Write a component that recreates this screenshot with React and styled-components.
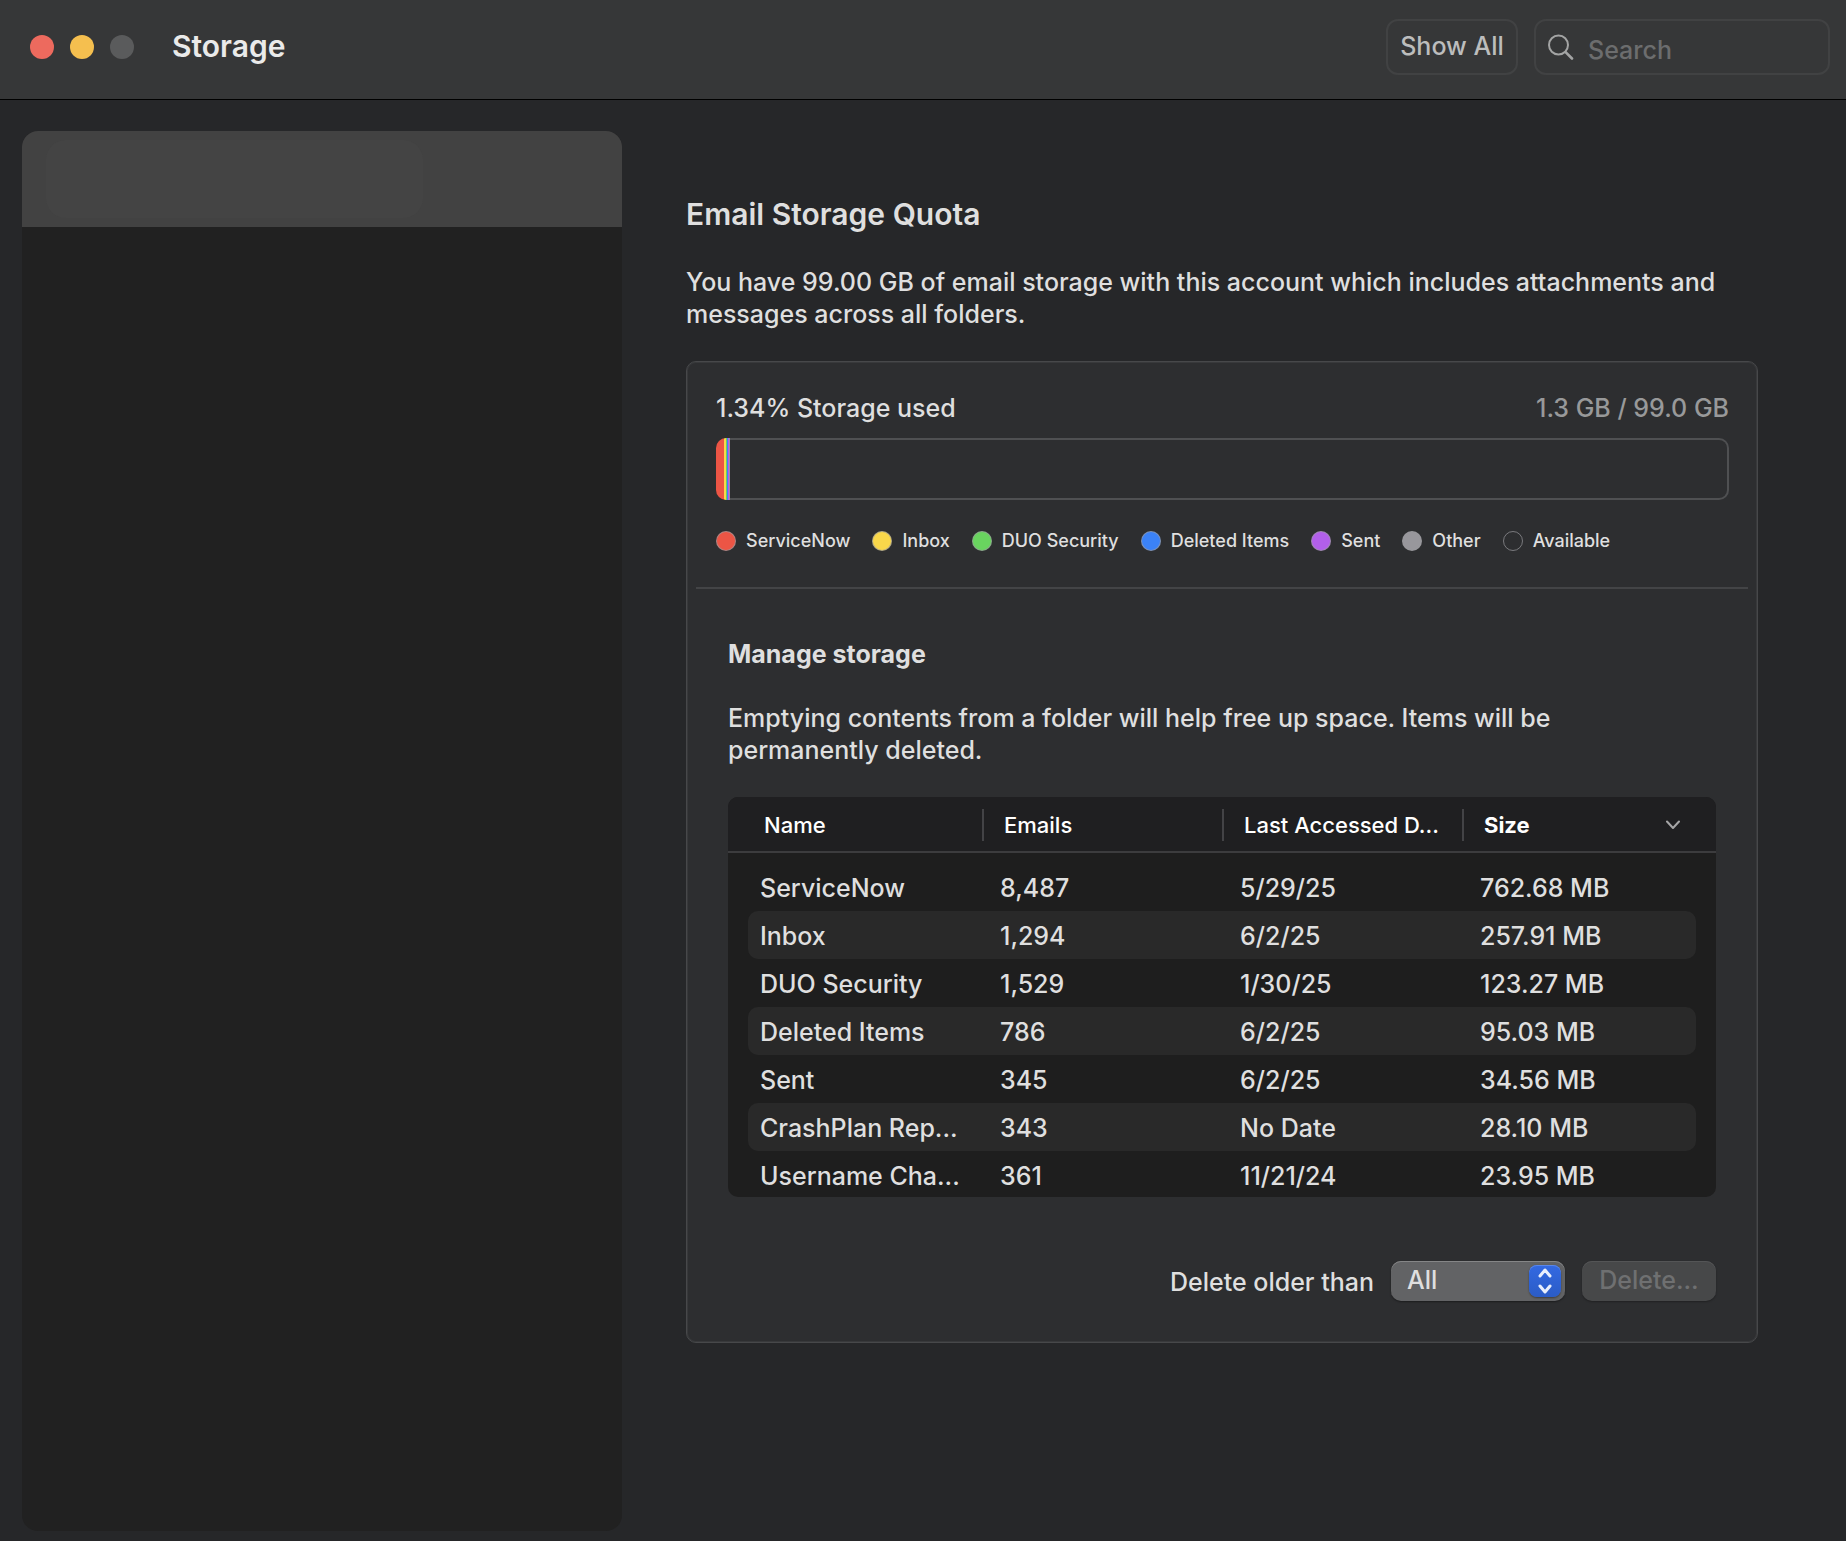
import React, { useState } from 'react';
import styled, { createGlobalStyle } from 'styled-components';

const segments = [
	{ name: 'ServiceNow', color: '#ec5545', width: 8 },
	{ name: 'Inbox', color: '#f9d74a', width: 2 },
	{ name: 'DUO Security', color: '#69d45f', width: 1 },
	{ name: 'Deleted Items', color: '#3b82f7', width: 1 },
	{ name: 'Sent', color: '#b25fea', width: 1 },
	{ name: 'Other', color: '#98979c', width: 1 },
];

const folders = [
	{ name: 'ServiceNow', emails: '8,487', date: '5/29/25', size: '762.68 MB' },
	{ name: 'Inbox', emails: '1,294', date: '6/2/25', size: '257.91 MB' },
	{ name: 'DUO Security', emails: '1,529', date: '1/30/25', size: '123.27 MB' },
	{ name: 'Deleted Items', emails: '786', date: '6/2/25', size: '95.03 MB' },
	{ name: 'Sent', emails: '345', date: '6/2/25', size: '34.56 MB' },
	{ name: 'CrashPlan Rep...', emails: '343', date: 'No Date', size: '28.10 MB' },
	{ name: 'Username Cha...', emails: '361', date: '11/21/24', size: '23.95 MB' },
];

const App = () => {
	const [keyword, setKeyword] = useState('');
	const [olderThan, setOlderThan] = useState('all');

	return (
		<>
			<GlobalStyle />
			<Window>
				<TitleBar>
					<Lights>
						<Light $color="#ed6a5e" aria-label="Close" />
						<Light $color="#f5bf4f" aria-label="Minimize" />
						<Light $color="#5a5b5c" aria-label="Zoom" disabled />
					</Lights>
					<WindowTitle>Storage</WindowTitle>
					<ShowAllBtn type="button">Show All</ShowAllBtn>
					<SearchBox>
						<svg width="26" height="26" viewBox="0 0 26 26" fill="none" stroke="#a3a4a4" strokeLinecap="round">
							<circle cx="10.5" cy="11" r="9.5" strokeWidth="2" />
							<path d="M17.6 18.1L24 24.5" strokeWidth="2.6" />
						</svg>
						<SearchInput type="text" aria-label="Search" placeholder="Search" value={keyword} onChange={(e) => setKeyword(e.target.value)} />
					</SearchBox>
				</TitleBar>

				<Body>
					<Sidebar>
						<AccountRow type="button" aria-label="Account">
							<AccountName />
						</AccountRow>
					</Sidebar>

					<Content>
						<Title>Email Storage Quota</Title>
						<Desc>You have 99.00 GB of email storage with this account which includes attachments and messages across all folders.</Desc>

						<Card>
							<Usage>
								<UsageHead>
									<span>1.34% Storage used</span>
									<Quota>1.3 GB / 99.0 GB</Quota>
								</UsageHead>
								<UsageBar>
									<Used>
										{segments.map((s) => (
											<div key={s.name} style={{ width: s.width, background: s.color }} />
										))}
									</Used>
									<Free />
								</UsageBar>
								<Legend>
									{segments.map((s) => (
										<LegendItem key={s.name}>
											<Dot $color={s.color} />
											{s.name}
										</LegendItem>
									))}
									<LegendItem>
										<Dot $color="transparent" />
										Available
									</LegendItem>
								</Legend>
							</Usage>
							<Divider />
							<Manage>
								<SubTitle>Manage storage</SubTitle>
								<ManageDesc>Emptying contents from a folder will help free up space. Items will be permanently deleted.</ManageDesc>
								<TableBox>
									<Table>
										<Head>
											<HeadRow>
												<HeadCell>Name</HeadCell>
												<HeadCell>Emails</HeadCell>
												<HeadCell>Last Accessed D...</HeadCell>
												<HeadCell $sorted aria-sort="descending">
													Size
													<svg width="14" height="10" viewBox="0 0 14 10" fill="none" stroke="#a5a5a6" strokeWidth="2" strokeLinecap="round" strokeLinejoin="round">
														<path d="M1 1.5L7 8L13 1.5" />
													</svg>
												</HeadCell>
											</HeadRow>
										</Head>
										<Rows>
											{folders.map((f) => (
												<Row key={f.name}>
													<Cell>{f.name}</Cell>
													<Cell>{f.emails}</Cell>
													<Cell>{f.date}</Cell>
													<Cell>{f.size}</Cell>
												</Row>
											))}
										</Rows>
									</Table>
								</TableBox>
								<Actions>
									<ActionLabel htmlFor="older">Delete older than</ActionLabel>
									<SelectBox>
										<Select id="older" value={olderThan} onChange={(e) => setOlderThan(e.target.value)}>
											<option value="all">All</option>
										</Select>
										<Stepper>
											<svg width="14" height="26" viewBox="0 0 14 26" fill="none" stroke="#e9effc" strokeWidth="3" strokeLinecap="round" strokeLinejoin="round">
												<path d="M2 8L7 2L12 8" />
												<path d="M2 18L7 24L12 18" />
											</svg>
										</Stepper>
									</SelectBox>
									<DeleteBtn type="button" disabled>
										Delete...
									</DeleteBtn>
								</Actions>
							</Manage>
						</Card>
					</Content>
				</Body>
			</Window>
		</>
	);
};

export default App;

const GlobalStyle = createGlobalStyle`
	* {
		box-sizing: border-box;
	}

	body {
		margin: 0;
		background: #262729;
	}

	body, button, input, select {
		font-family: Inter, "Liberation Sans", sans-serif;
		font-size: 25px;
		font-weight: 500;
		line-height: 32px;
		color: #dfdfdf;
	}
`;

const Window = styled.div`
	display: flex;
	flex-direction: column;
	min-height: 100vh;
`;

const TitleBar = styled.header`
	display: flex;
	align-items: center;
	padding: 19px 16px 24px 30px;
	background: #363738;
	border-bottom: 1px solid #000;
`;

const Lights = styled.div`
	display: flex;
	gap: 16px;
`;

const Light = styled.button`
	width: 24px;
	height: 24px;
	padding: 0;
	border: none;
	border-radius: 50%;
	background: ${(props) => props.$color};
`;

const WindowTitle = styled.h1`
	flex: 1;
	margin: 0 0 0 38px;
	padding-bottom: 2px;
	font-size: 30px;
	line-height: 36px;
	font-weight: 600;
	color: #eaeaea;
`;

const ShowAllBtn = styled.button`
	width: 132px;
	height: 56px;
	margin-right: 16px;
	padding: 0 0 2px;
	border: 2px solid #414243;
	border-radius: 12px;
	background: transparent;
	color: #bcbdbd;
`;

const SearchBox = styled.div`
	display: flex;
	align-items: center;
	gap: 14px;
	width: 296px;
	height: 56px;
	padding: 0 12px;
	border: 2px solid #414243;
	border-radius: 12px;

	svg {
		flex: none;
	}
`;

const SearchInput = styled.input`
	flex: 1;
	min-width: 0;
	padding: 6px 0 0;
	border: none;
	outline: none;
	background: transparent;

	&::placeholder {
		color: #6c6d6e;
		opacity: 1;
	}
`;

const Body = styled.div`
	display: flex;
	flex: 1;
`;

const Sidebar = styled.aside`
	flex: 0 0 600px;
	margin: 31px 0 10px 22px;
	border-radius: 16px;
	background: #212121;
	overflow: hidden;
`;

const AccountRow = styled.button`
	display: block;
	width: 100%;
	height: 96px;
	padding: 9px 24px;
	border: none;
	background: #424242;
`;

const AccountName = styled.span`
	display: block;
	width: 377px;
	height: 78px;
	border-radius: 20px;
	background: #444;
`;

const Content = styled.main`
	flex: 1;
	min-width: 0;
	padding: 96px 88px 40px 64px;
`;

const Title = styled.h2`
	margin: 0 0 34px;
	font-size: 30px;
	line-height: 36px;
	font-weight: 600;
`;

const Desc = styled.p`
	margin: 0 0 31px;
`;

const Card = styled.section`
	border: 1px solid #47484a;
	border-radius: 10px;
	background: #2d2e30;
	box-shadow: inset 0 0 0 1px #38393b;
`;

const Usage = styled.div`
	padding: 30px 28px 36px 29px;
`;

const UsageHead = styled.div`
	display: flex;
	justify-content: space-between;
	margin-bottom: 14px;
`;

const Quota = styled.span`
	color: #98999a;
`;

const UsageBar = styled.div`
	display: flex;
	height: 62px;
	margin-bottom: 31px;
`;

const Used = styled.div`
	display: flex;
	border-radius: 10px 0 0 10px;
	overflow: hidden;
`;

const Free = styled.div`
	flex: 1;
	border: 2px solid #4f5052;
	border-left: none;
	border-radius: 0 10px 10px 0;
`;

const Legend = styled.ul`
	display: flex;
	gap: 22px;
	margin: 0;
	padding: 0;
	list-style: none;
`;

const LegendItem = styled.li`
	display: flex;
	align-items: center;
	gap: 10px;
	font-size: 18px;
	line-height: 20px;
`;

const Dot = styled.span`
	width: 20px;
	height: 20px;
	border: 1px solid rgba(152, 152, 156, 0.7);
	border-radius: 50%;
	background: ${(props) => props.$color};
`;

const Divider = styled.hr`
	height: 2px;
	margin: 0 9px;
	border: none;
	background: #434446;
`;

const Manage = styled.div`
	padding: 49px 41px 41px;
`;

const SubTitle = styled.h3`
	margin: 0 0 32px;
	font-size: 25px;
	line-height: 32px;
	font-weight: 700;
`;

const ManageDesc = styled.p`
	margin: 0 0 31px;
	padding-right: 60px;
`;

const TableBox = styled.div`
	height: 400px;
	margin-bottom: 64px;
	border-radius: 10px;
	background: #1e1e1e;
	overflow: hidden;
`;

const Table = styled.table`
	display: block;
`;

const Head = styled.thead`
	display: block;
	padding: 12px 20px 10px;
	border-bottom: 2px solid #3c3c3e;
	background: #1f1f21;
`;

const HeadRow = styled.tr`
	display: grid;
	grid-template-columns: 240fr 240fr 240fr 228fr;
`;

const HeadCell = styled.th`
	display: flex;
	align-items: center;
	justify-content: space-between;
	height: 32px;
	margin-right: 4px;
	padding: 0 10px 0 16px;
	border-right: 2px solid ${(props) => (props.$sorted ? 'transparent' : '#434346')};
	font-size: 22px;
	font-weight: ${(props) => (props.$sorted ? 700 : 500)};
	color: #fff;
	white-space: nowrap;
`;

const Rows = styled.tbody`
	display: block;
	padding: 10px 20px 0;
`;

const Row = styled.tr`
	display: grid;
	grid-template-columns: 240fr 240fr 240fr 228fr;
	border-radius: 10px;

	&:nth-child(even) {
		background: #292929;
	}
`;

const Cell = styled.td`
	padding: 9px 0 7px 12px;
	white-space: nowrap;
`;

const Actions = styled.div`
	display: flex;
	justify-content: flex-end;
	align-items: center;
	gap: 17px;
`;

const ActionLabel = styled.label`
	padding-top: 2px;
`;

const SelectBox = styled.div`
	position: relative;
	width: 174px;
	height: 40px;
`;

const Select = styled.select`
	width: 100%;
	height: 100%;
	padding: 0 48px 3px 16px;
	border: none;
	border-radius: 10px;
	appearance: none;
	background: #626365;
	box-shadow: inset 0 1px 0 #858687, 0 1px 2px rgba(0, 0, 0, 0.4);
`;

const Stepper = styled.span`
	position: absolute;
	top: 4px;
	right: 4px;
	display: flex;
	align-items: center;
	justify-content: center;
	width: 32px;
	height: 32px;
	border-radius: 8px;
	background: linear-gradient(#3369e2, #2b5cc6);
	box-shadow: inset 0 1px 0 #5b87e8, 0 1px 2px rgba(0, 0, 0, 0.4);
	pointer-events: none;
`;

const DeleteBtn = styled.button`
	width: 134px;
	height: 40px;
	padding: 0 0 2px;
	border: none;
	border-radius: 10px;
	background: #474849;
	box-shadow: inset 0 1px 0 #545556, 0 1px 2px rgba(0, 0, 0, 0.3);
	color: #6f7071;
`;
